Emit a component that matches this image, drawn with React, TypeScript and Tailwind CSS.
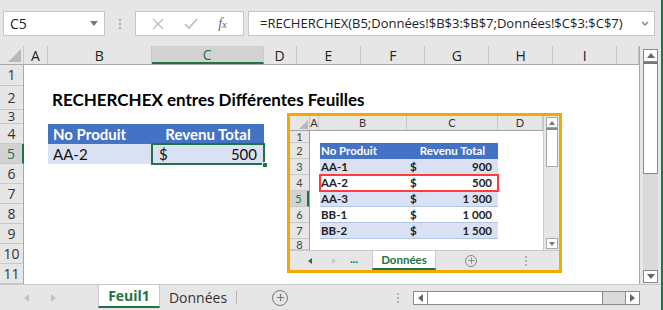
import { Plus } from 'lucide-react';

const cols = [
  { l: 'A', w: 24 },
  { l: 'B', w: 104 },
  { l: 'C', w: 112 },
  { l: 'D', w: 33 },
  { l: 'E', w: 65 },
  { l: 'F', w: 64 },
  { l: 'G', w: 64 },
  { l: 'H', w: 64 },
  { l: 'I', w: 64 },
  { l: '', w: 22 },
];

const rowHeights = [21, 24, 14, 20, 20, 20, 20, 20, 20, 20, 20];

const miniCols = [
  { l: 'A', w: 9 },
  { l: 'B', w: 88 },
  { l: 'C', w: 91 },
  { l: 'D', w: 45 },
];

const miniRows = [
  { n: 1, h: 12 },
  { n: 2, h: 16 },
  { n: 3, h: 16 },
  { n: 4, h: 16 },
  { n: 5, h: 16 },
  { n: 6, h: 16 },
  { n: 7, h: 16 },
  { n: 8, h: 11 },
];

const data = [
  { p: 'AA-1', v: '900' },
  { p: 'AA-2', v: '500' },
  { p: 'AA-3', v: '1 300' },
  { p: 'BB-1', v: '1 000' },
  { p: 'BB-2', v: '1 500' },
];

const VDots = () => (
  <div className="flex flex-col gap-[2px]">
    <div className="w-[2px] h-[2px] bg-[#b0b0b0]" />
    <div className="w-[2px] h-[2px] bg-[#b0b0b0]" />
    <div className="w-[2px] h-[2px] bg-[#b0b0b0]" />
  </div>
);

const Corner = ({ size }: { size: number }) => (
  <svg width={size} height={size} viewBox="0 0 10 10">
    <polygon points="10,0 10,10 0,10" fill="#b8b8b8" />
  </svg>
);

const MiniSheet = () => {
  return (
    <div className="absolute left-[287px] top-[113px] w-[275px] h-[160px] border-[3px] border-[#f5a800] bg-white flex flex-col overflow-hidden">
      <div className="flex flex-1 min-h-0">
        <div className="flex flex-col w-[253px]">
          {/* column headers */}
          <div className="flex h-[15px] bg-[#e6e6e6] border-b border-[#a0a0a0] text-[11px] text-[#333]">
            <div className="w-[20px] flex items-end justify-end pr-[1px] pb-[1px] border-r border-[#c8c8c8]">
              <Corner size={9} />
            </div>
            {miniCols.map((c) => (
              <div
                key={c.l}
                style={{ width: c.w }}
                className="flex items-center justify-center border-r border-[#c8c8c8]"
              >
                {c.l}
              </div>
            ))}
          </div>
          <div className="flex flex-1 min-h-0">
            <div className="w-[20px] flex flex-col bg-[#e6e6e6] border-r border-[#a0a0a0] text-[11px] text-[#444]">
              {miniRows.map((r) => (
                <div
                  key={r.n}
                  style={{ height: r.h }}
                  className={
                    'flex items-center justify-center border-b border-[#c8c8c8] overflow-hidden leading-none ' +
                    (r.n === 5 ? 'bg-[#d2d2d2] text-[#217346] border-r-2 border-r-[#217346]' : '')
                  }
                >
                  {r.n}
                </div>
              ))}
            </div>
            <div className="flex flex-col flex-1 pl-[10px] pt-[12px]">
              <div className="w-[178px] flex flex-col text-[11.5px] font-bold text-[#222]">
                <div className="h-[16px] flex bg-[#4472c4] text-white">
                  <div className="w-[87px] pl-[1px] flex items-center">No Produit</div>
                  <div className="flex-1 flex items-center justify-center">Revenu Total</div>
                </div>
                {data.map((d, i) => (
                  <div
                    key={d.p}
                    className={
                      'h-[16px] flex border-b border-[#b4c6e7] ' +
                      (i % 2 === 0 ? 'bg-[#d9e1f2] ' : 'bg-white ') +
                      (i === 1 ? 'outline-2 outline-[#ff3b3b] -outline-offset-1 relative' : '')
                    }
                  >
                    <div className="w-[87px] pl-[1px] flex items-center">{d.p}</div>
                    <div className="flex-1 flex items-center justify-between pl-[3px] pr-[6px]">
                      <span>$</span>
                      <span>{d.v}</span>
                    </div>
                  </div>
                ))}
              </div>
            </div>
          </div>
        </div>
        {/* mini vertical scrollbar */}
        <div className="flex-1 bg-[#e6e6e6] flex flex-col items-center pt-[1px] border-l border-[#c8c8c8]">
          <div className="w-[12px] h-[11px] bg-white border border-[#a8a8a8] flex items-center justify-center">
            <svg width="6" height="4" viewBox="0 0 6 4">
              <polygon points="3,0 6,4 0,4" fill="#777" />
            </svg>
          </div>
          <div className="w-[12px] h-[39px] bg-white border border-[#a8a8a8] border-t-2 border-t-[#888]" />
          <div className="flex-1" />
          <div className="w-[12px] h-[11px] bg-white border border-[#a8a8a8] flex items-center justify-center mb-[1px]">
            <svg width="6" height="4" viewBox="0 0 6 4">
              <polygon points="0,0 6,0 3,4" fill="#777" />
            </svg>
          </div>
        </div>
      </div>
      {/* mini tab bar */}
      <div className="h-[20px] bg-[#e6e6e6] border-t border-[#c8c8c8] flex items-stretch text-[11.5px] font-bold">
        <div className="w-[22px] flex items-center justify-end">
          <svg width="4" height="6" viewBox="0 0 4 6">
            <polygon points="4,0 4,6 0,3" fill="#217346" />
          </svg>
        </div>
        <div className="w-[24px] flex items-center justify-end">
          <svg width="4" height="6" viewBox="0 0 4 6">
            <polygon points="0,0 0,6 4,3" fill="#c8c8c8" />
          </svg>
        </div>
        <div className="w-[36px] flex items-end justify-center pb-[3px] text-[#217346]">...</div>
        <div className="w-[64px] bg-white flex items-center justify-center text-[#217346] border-b-2 border-[#217346] border-x border-x-[#c8c8c8]">
          Données
        </div>
        <div className="w-[70px] flex items-center justify-center text-[#888]">
          <div className="w-[12px] h-[12px] rounded-full border border-[#888] flex items-center justify-center">
            <Plus size={9} strokeWidth={2.5} />
          </div>
        </div>
        <div className="w-[40px] flex items-center justify-center">
          <VDots />
        </div>
      </div>
    </div>
  );
};

export default function App() {
  return (
    <div
      className="w-[663px] h-[310px] bg-[#e6e6e6] relative overflow-hidden flex flex-col"
      style={{ fontFamily: 'Lato, "Open Sans", sans-serif' }}
    >
      {/* formula bar */}
      <div className="h-[47px] flex items-start pt-[11px] pl-[3px] pr-[8px] gap-0">
        <div className="w-[102px] h-[25px] bg-white border border-[#c6c6c6] flex items-center justify-between pl-[6px] pr-[6px] text-[14px] text-[#222]" style={{ fontFamily: '"Open Sans", sans-serif' }}>
          <span>C5</span>
          <svg width="8" height="5" viewBox="0 0 8 5">
            <polygon points="0,0 8,0 4,5" fill="#777" />
          </svg>
        </div>
        <div className="w-[30px] h-[25px] flex items-center justify-center">
          <VDots />
        </div>
        <div className="w-[109px] h-[25px] bg-white border border-[#c6c6c6] flex items-center justify-around px-[6px]">
          <svg width="12" height="12" viewBox="0 0 12 12">
            <path d="M1 1 L11 11 M11 1 L1 11" stroke="#bdbdbd" strokeWidth="1.4" />
          </svg>
          <svg width="14" height="12" viewBox="0 0 14 12">
            <path d="M1 6 L5 10 L13 1" stroke="#bdbdbd" strokeWidth="1.6" fill="none" />
          </svg>
          <span className="italic text-[14px] text-[#666]" style={{ fontFamily: '"Liberation Serif", serif' }}>
            f<span className="text-[11px]">x</span>
          </span>
        </div>
        <div className="ml-[4px] flex-1 h-[25px] bg-white border border-[#c6c6c6] flex items-center justify-between pl-[11px] pr-[5px] text-[13px] text-[#222]" style={{ fontFamily: '"Open Sans", sans-serif' }}>
          <span>=RECHERCHEX(B5;Données!$B$3:$B$7;Données!$C$3:$C$7)</span>
          <svg width="8" height="6" viewBox="0 0 8 6">
            <path d="M1 1 L4 4 L7 1" stroke="#888" strokeWidth="1.5" fill="none" />
          </svg>
        </div>
      </div>

      {/* sheet area */}
      <div className="flex h-[238px]">
        <div className="w-[640px] flex flex-col border-r border-[#a8a8a8]">
          {/* column headers */}
          <div className="h-[19px] flex border-b border-[#a8a8a8] text-[14px] text-[#222]" style={{ fontFamily: '"Open Sans", sans-serif' }}>
            <div className="w-[24px] flex items-end justify-end pr-[2px] pb-[2px] border-r border-[#c8c8c8]">
              <Corner size={13} />
            </div>
            {cols.map((c, i) => (
              <div
                key={i}
                style={{ width: c.w }}
                className={
                  'flex items-center justify-center border-r border-[#c8c8c8] ' +
                  (c.l === 'C' ? 'bg-[#d2d2d2] text-[#217346] border-b-2 border-b-[#217346]' : '')
                }
              >
                {c.l}
              </div>
            ))}
          </div>
          {/* rows */}
          <div className="flex flex-1">
            <div className="w-[24px] flex flex-col border-r border-[#a8a8a8] text-[14px] text-[#333]" style={{ fontFamily: '"Open Sans", sans-serif' }}>
              {rowHeights.map((h, i) => (
                <div
                  key={i}
                  style={{ height: h }}
                  className={
                    'flex items-center justify-center border-b border-[#c8c8c8] overflow-hidden leading-none ' +
                    (i === 2 ? 'text-[13px] ' : '') +
                    (i === 4 ? 'bg-[#d2d2d2] text-[#217346] border-r-2 border-r-[#217346] mr-[-1px]' : '')
                  }
                >
                  {i + 1}
                </div>
              ))}
            </div>
            <div className="flex-1 bg-white flex flex-col">
              <div className="h-[21px]" />
              <div className="h-[24px] flex items-end pl-[28px] pb-[2px] text-[17px] font-bold text-black leading-none">
                RECHERCHEX entres Différentes Feuilles
              </div>
              <div className="h-[14px]" />
              <div className="pl-[24px] flex flex-col text-[15px] text-[#111]">
                <div className="h-[20px] flex bg-[#4472c4] text-white font-bold w-[216px]">
                  <div className="w-[104px] pl-[5px] flex items-center">No Produit</div>
                  <div className="flex-1 flex items-center justify-center">Revenu Total</div>
                </div>
                <div className="h-[20px] flex bg-[#d9e1f2] w-[216px]">
                  <div className="w-[104px] pl-[5px] flex items-center">AA-2</div>
                  <div className="flex-1 relative flex items-center justify-between pl-[7px] pr-[7px] outline-2 outline-[#217346] -outline-offset-1">
                    <span>$</span>
                    <span>500</span>
                    <div className="absolute right-[-4px] bottom-[-4px] w-[6px] h-[6px] bg-[#217346] border border-white" />
                  </div>
                </div>
              </div>
            </div>
          </div>
        </div>
        {/* vertical scrollbar */}
        <div className="flex-1 flex flex-col pl-[3px] pr-[5px] pt-[3px] pb-[1px]">
          <div className="h-[13px] bg-white border border-[#8a8a8a] flex items-center justify-center">
            <svg width="8" height="5" viewBox="0 0 8 5">
              <polygon points="4,0 8,5 0,5" fill="#666" />
            </svg>
          </div>
          <div className="h-[112px] bg-white border border-[#8a8a8a] border-t-2 border-t-[#777]" />
          <div className="flex-1 bg-[#dadada]" />
          <div className="h-[13px] bg-white border border-[#8a8a8a] flex items-center justify-center">
            <svg width="8" height="5" viewBox="0 0 8 5">
              <polygon points="0,0 8,0 4,5" fill="#666" />
            </svg>
          </div>
        </div>
      </div>

      {/* sheet tabs */}
      <div className="flex-1 flex border-t border-[#c8c8c8] items-stretch text-[14px]" style={{ fontFamily: '"Open Sans", sans-serif' }}>
        <div className="w-[98px] flex items-center pl-[24px] gap-[22px]">
          <svg width="5" height="8" viewBox="0 0 5 8">
            <polygon points="5,0 5,8 0,4" fill="#c4c4c4" />
          </svg>
          <svg width="5" height="8" viewBox="0 0 5 8">
            <polygon points="0,0 0,8 5,4" fill="#c4c4c4" />
          </svg>
        </div>
        <div className="w-[62px] bg-white border-x border-[#c8c8c8] flex items-center justify-center font-bold text-[#217346] border-b-2 border-b-[#217346] mb-[2px]">
          Feuil1
        </div>
        <div className="w-[76px] flex items-center justify-center text-[#333]">
          <span className="pb-[1px]">Données</span>
        </div>
        <div className="w-[1px] my-[6px] bg-[#b8b8b8]" />
        <div className="w-[86px] flex items-center justify-center text-[#777]">
          <div className="w-[16px] h-[16px] rounded-full border-[1.5px] border-[#777] flex items-center justify-center">
            <Plus size={11} strokeWidth={2.5} />
          </div>
        </div>
        <div className="flex-1 flex items-center justify-end pr-[14px]">
          <VDots />
        </div>
        <div className="w-[227px] flex items-center">
          <div className="w-full h-[14px] flex border border-[#8a8a8a] bg-[#dadada]">
            <div className="w-[14px] bg-white border-r border-[#8a8a8a] flex items-center justify-center">
              <svg width="5" height="8" viewBox="0 0 5 8">
                <polygon points="5,0 5,8 0,4" fill="#666" />
              </svg>
            </div>
            <div className="w-[175px] bg-white border-r border-[#8a8a8a]" />
            <div className="flex-1" />
            <div className="w-[14px] bg-white border-l border-[#8a8a8a] flex items-center justify-center">
              <svg width="5" height="8" viewBox="0 0 5 8">
                <polygon points="0,0 0,8 5,4" fill="#666" />
              </svg>
            </div>
          </div>
        </div>
        <div className="w-[23px]" />
      </div>

      <div className="absolute right-0 top-0 bottom-0 w-[2px] bg-[#217346]" />

      <MiniSheet />
    </div>
  );
}
